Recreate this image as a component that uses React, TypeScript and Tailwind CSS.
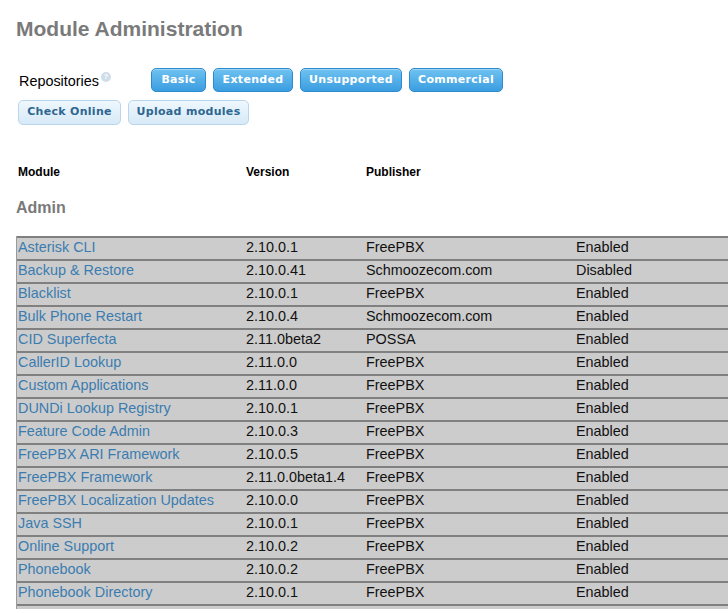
import React from "react";

type Mod = { name: string; version: string; publisher: string; status: string };

const modules: Mod[] = [
  { name: "Asterisk CLI", version: "2.10.0.1", publisher: "FreePBX", status: "Enabled" },
  { name: "Backup & Restore", version: "2.10.0.41", publisher: "Schmoozecom.com", status: "Disabled" },
  { name: "Blacklist", version: "2.10.0.1", publisher: "FreePBX", status: "Enabled" },
  { name: "Bulk Phone Restart", version: "2.10.0.4", publisher: "Schmoozecom.com", status: "Enabled" },
  { name: "CID Superfecta", version: "2.11.0beta2", publisher: "POSSA", status: "Enabled" },
  { name: "CallerID Lookup", version: "2.11.0.0", publisher: "FreePBX", status: "Enabled" },
  { name: "Custom Applications", version: "2.11.0.0", publisher: "FreePBX", status: "Enabled" },
  { name: "DUNDi Lookup Registry", version: "2.10.0.1", publisher: "FreePBX", status: "Enabled" },
  { name: "Feature Code Admin", version: "2.10.0.3", publisher: "FreePBX", status: "Enabled" },
  { name: "FreePBX ARI Framework", version: "2.10.0.5", publisher: "FreePBX", status: "Enabled" },
  { name: "FreePBX Framework", version: "2.11.0.0beta1.4", publisher: "FreePBX", status: "Enabled" },
  { name: "FreePBX Localization Updates", version: "2.10.0.0", publisher: "FreePBX", status: "Enabled" },
  { name: "Java SSH", version: "2.10.0.1", publisher: "FreePBX", status: "Enabled" },
  { name: "Online Support", version: "2.10.0.2", publisher: "FreePBX", status: "Enabled" },
  { name: "Phonebook", version: "2.10.0.2", publisher: "FreePBX", status: "Enabled" },
  { name: "Phonebook Directory", version: "2.10.0.1", publisher: "FreePBX", status: "Enabled" },
];

const repoButtons = [
  { label: "Basic", w: "w-[55px]" },
  { label: "Extended", w: "w-[80px]" },
  { label: "Unsupported", w: "w-[102px]" },
  { label: "Commercial", w: "w-[94px]" },
];

function RepoButton({ label, w }: { label: string; w: string }) {
  return (
    <button
      className={`${w} h-[24px] rounded-[5px] border border-[#2d8bcf] bg-gradient-to-b from-[#6ec2f0] to-[#3a9de0] text-[11px] font-bold text-white tracking-[0.3px] shadow-[inset_0_1px_0_rgba(255,255,255,0.35)]`}
      style={{ fontFamily: '"DejaVu Sans", Verdana, sans-serif' }}
    >
      {label}
    </button>
  );
}

function LightButton({ label, w }: { label: string; w: string }) {
  return (
    <button
      className={`${w} h-[25px] rounded-[5px] border border-[#b9d6ea] bg-gradient-to-b from-[#eef7fd] to-[#d7eaf7] text-[11px] font-bold text-[#2f6690] tracking-[0.3px]`}
      style={{ fontFamily: '"DejaVu Sans", Verdana, sans-serif' }}
    >
      {label}
    </button>
  );
}

export default function App() {
  return (
    <div
      className="h-[613px] w-[728px] overflow-hidden bg-white pl-[16px] pt-[16px]"
      style={{ fontFamily: '"Liberation Sans", Arial, sans-serif' }}
    >
      <h1 className="text-[21px] leading-[26px] font-bold text-[#7a7a7a]">Module Administration</h1>

      <div className="mt-[25px] flex items-center">
        <span className="ml-[3px] mt-[4px] text-[14.4px] text-black">Repositories</span>
        <span className="mb-[6px] ml-[2px] flex h-[10px] w-[10px] items-center justify-center rounded-full bg-[#cfdde9] text-[7px] font-bold text-white">
          ?
        </span>
        <div className="ml-[40px] flex gap-[7px]">
          {repoButtons.map((b) => (
            <RepoButton key={b.label} label={b.label} w={b.w} />
          ))}
        </div>
      </div>

      <div className="mt-[7px] ml-[2px] flex gap-[7px]">
        <LightButton label="Check Online" w="w-[103px]" />
        <LightButton label="Upload modules" w="w-[121px]" />
      </div>

      <div className="mt-[38px] flex text-[12px] font-bold text-black">
        <div className="w-[230px] pl-[2px]">Module</div>
        <div className="w-[120px]">Version</div>
        <div>Publisher</div>
      </div>

      <h2 className="mt-[17px] text-[16px] leading-[20px] font-bold text-[#7a7a7a]">Admin</h2>

      <div className="mt-[18px] w-[720px] border-l border-[#9a9a9a]">
        {modules.map((m) => (
          <div key={m.name} className="flex h-[23px] items-center border-t-2 border-[#808080] bg-[#cccccc] text-[14.4px]">
            <a href="#" className="w-[229px] pl-[1px] text-[#3b7cb0]">
              {m.name}
            </a>
            <div className="w-[120px] text-[#111]">{m.version}</div>
            <div className="w-[210px] text-[#111]">{m.publisher}</div>
            <div className="text-[#111]">{m.status}</div>
          </div>
        ))}
        <div className="h-[5px] border-t-2 border-[#808080] bg-[#cccccc]" />
      </div>
    </div>
  );
}
